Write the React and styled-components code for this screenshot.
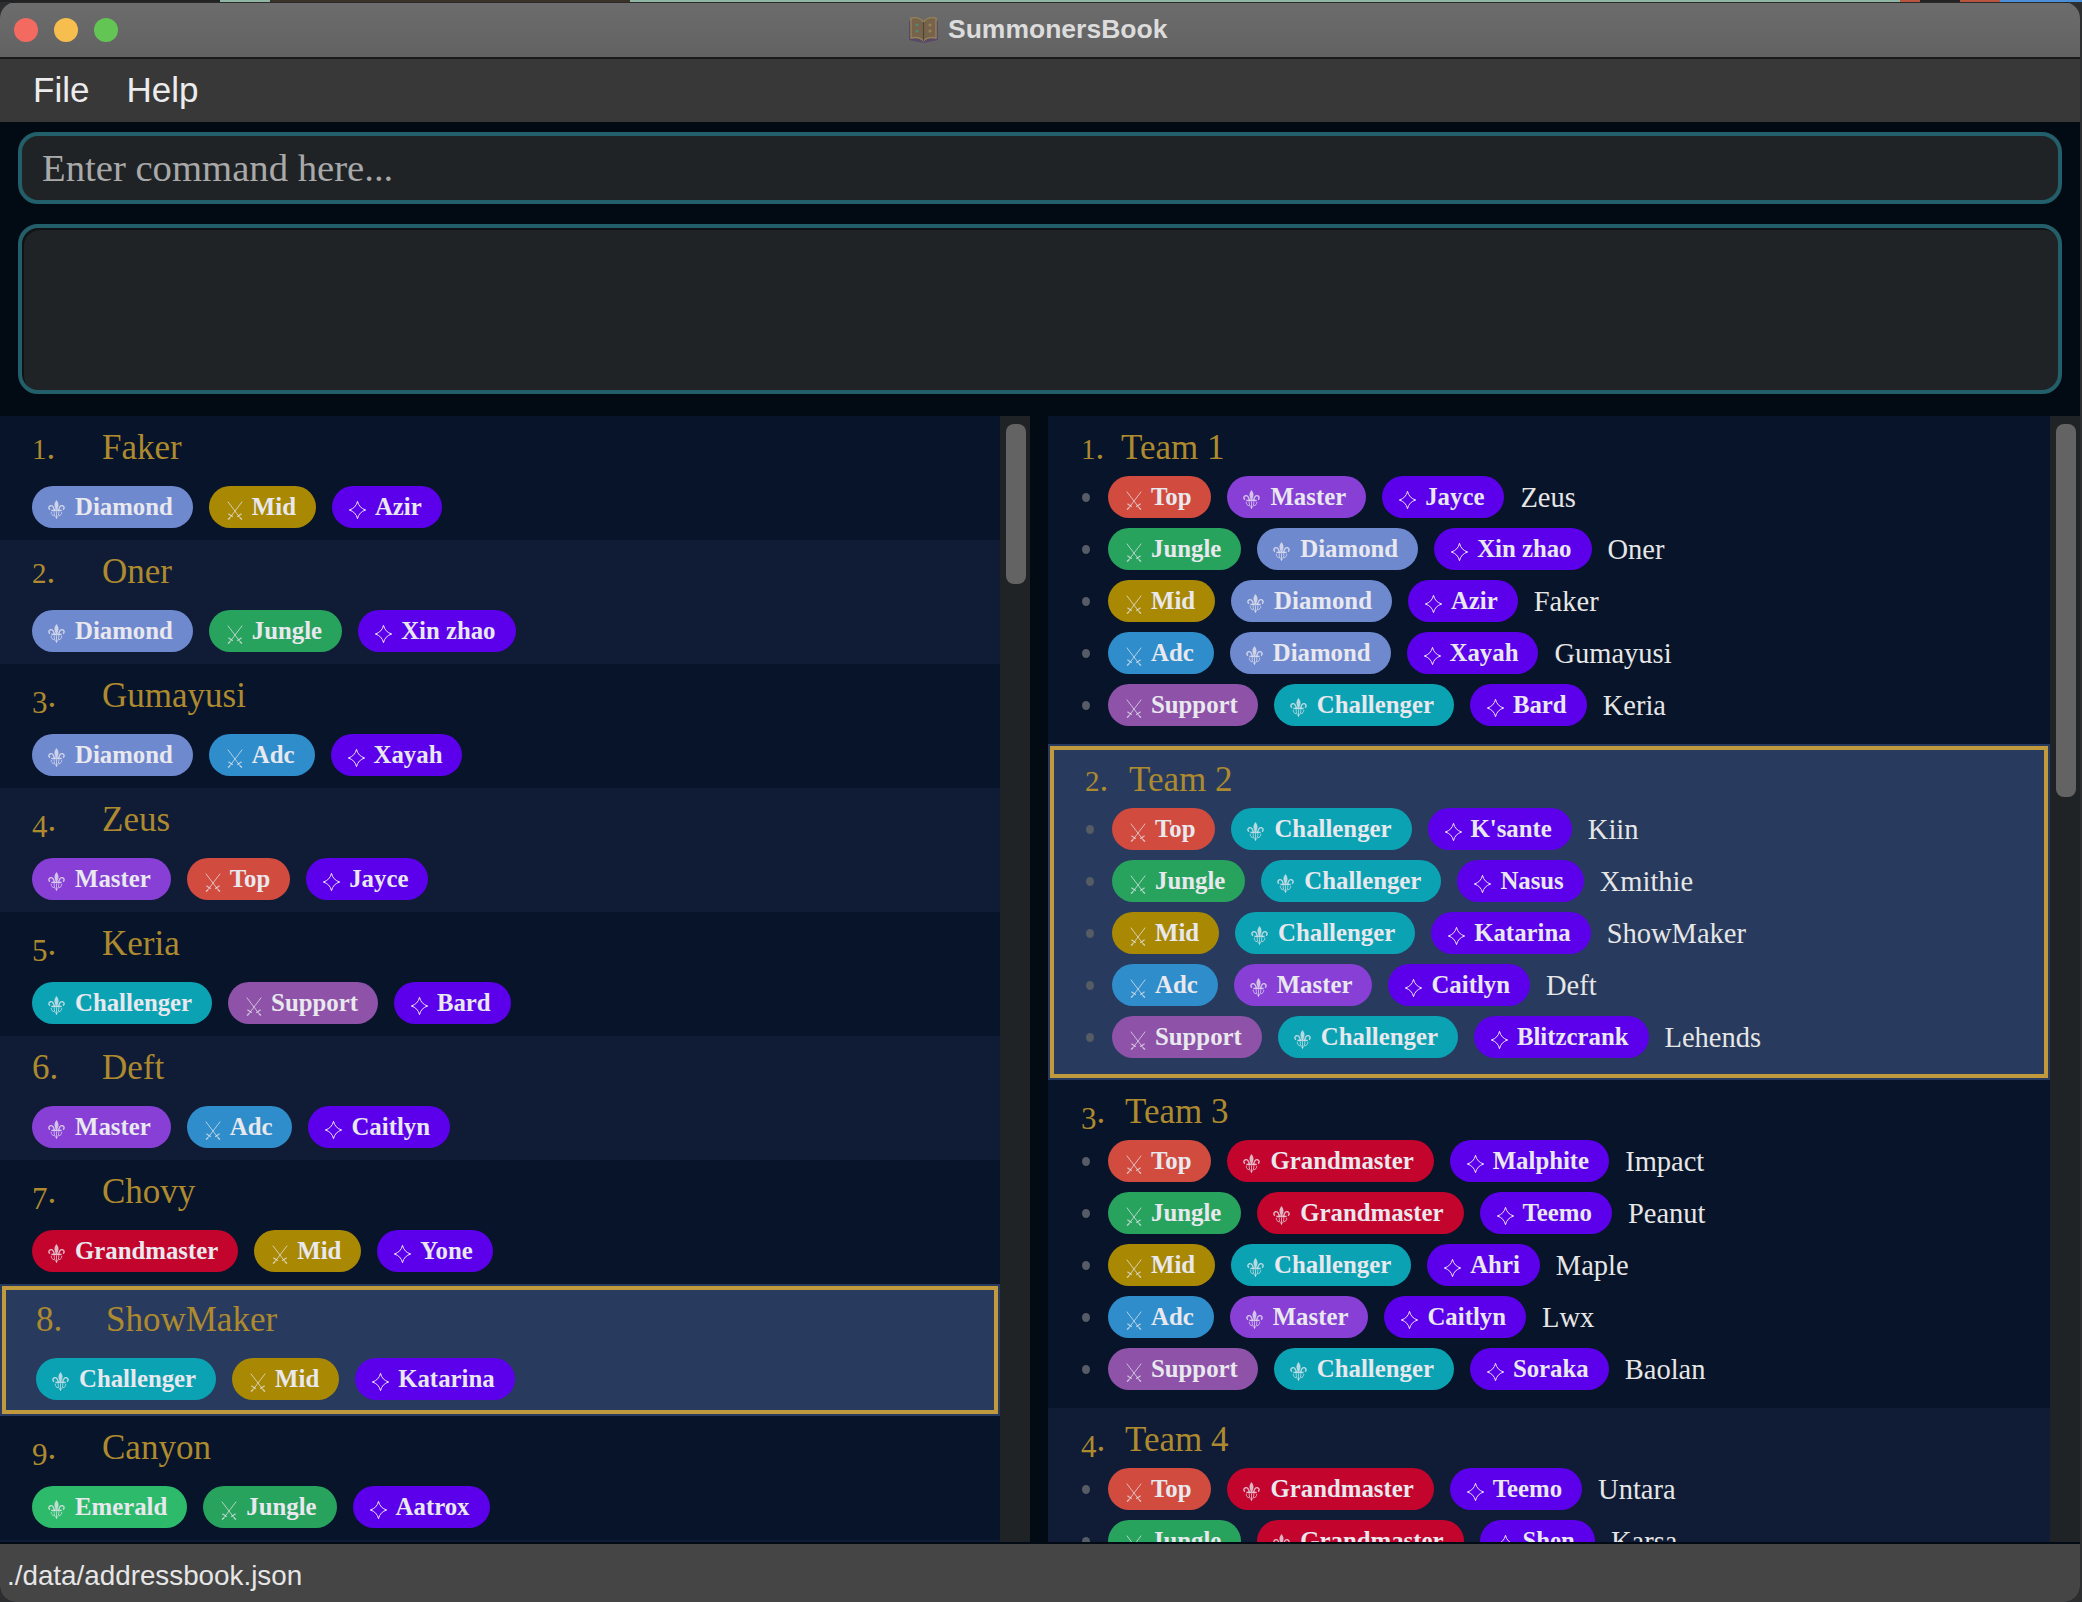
import React from 'react';
import styled, { createGlobalStyle } from 'styled-components';

const Global = createGlobalStyle`
  html, body { margin: 0; padding: 0; width: 2082px; height: 1602px; overflow: hidden; }
  body {
    background:
      linear-gradient(90deg, #222 0 220px, #8fb5a5 220px 270px, #3a3226 270px 630px, #8fb5a5 630px 1900px, #b8553f 1900px 1920px, #222 1920px 1960px, #b8553f 1960px 2000px, #4a8fd8 2000px) top / 100% 2px no-repeat,
      #2c2e30;
  }
  * { box-sizing: border-box; }
`;

const COLORS = {
  Diamond: '#6f89cf', Master: '#873fd6', Challenger: '#0ba3b3', Grandmaster: '#c3042d', Emerald: '#2dbb6b',
  Top: '#d14b3e', Jungle: '#27a35d', Mid: '#a98904', Adc: '#2f8dcb', Support: '#8e52a8',
};
const RANKS = ['Diamond', 'Master', 'Challenger', 'Grandmaster', 'Emerald'];
const ROLES = ['Top', 'Jungle', 'Mid', 'Adc', 'Support'];

const PLAYERS = [
  ['Faker', 'Diamond', 'Mid', 'Azir'],
  ['Oner', 'Diamond', 'Jungle', 'Xin zhao'],
  ['Gumayusi', 'Diamond', 'Adc', 'Xayah'],
  ['Zeus', 'Master', 'Top', 'Jayce'],
  ['Keria', 'Challenger', 'Support', 'Bard'],
  ['Deft', 'Master', 'Adc', 'Caitlyn'],
  ['Chovy', 'Grandmaster', 'Mid', 'Yone'],
  ['ShowMaker', 'Challenger', 'Mid', 'Katarina'],
  ['Canyon', 'Emerald', 'Jungle', 'Aatrox'],
];

const TEAMS = [
  ['Team 1', 40, [
    ['Top', 'Master', 'Jayce', 'Zeus'],
    ['Jungle', 'Diamond', 'Xin zhao', 'Oner'],
    ['Mid', 'Diamond', 'Azir', 'Faker'],
    ['Adc', 'Diamond', 'Xayah', 'Gumayusi'],
    ['Support', 'Challenger', 'Bard', 'Keria'],
  ]],
  ['Team 2', 44, [
    ['Top', 'Challenger', "K'sante", 'Kiin'],
    ['Jungle', 'Challenger', 'Nasus', 'Xmithie'],
    ['Mid', 'Challenger', 'Katarina', 'ShowMaker'],
    ['Adc', 'Master', 'Caitlyn', 'Deft'],
    ['Support', 'Challenger', 'Blitzcrank', 'Lehends'],
  ]],
  ['Team 3', 44, [
    ['Top', 'Grandmaster', 'Malphite', 'Impact'],
    ['Jungle', 'Grandmaster', 'Teemo', 'Peanut'],
    ['Mid', 'Challenger', 'Ahri', 'Maple'],
    ['Adc', 'Master', 'Caitlyn', 'Lwx'],
    ['Support', 'Challenger', 'Soraka', 'Baolan'],
  ]],
  ['Team 4', 44, [
    ['Top', 'Grandmaster', 'Teemo', 'Untara'],
    ['Jungle', 'Grandmaster', 'Shen', 'Karsa'],
  ]],
];

const Window = styled.div`
  width: 2080px;
  height: 1600px;
  margin-top: 2px;
  border-radius: 16px;
  overflow: hidden;
  display: flex;
  flex-direction: column;
  background: #020a14;
  font-family: "Liberation Serif", serif;
`;
const TitleBar = styled.div`
  height: 57px;
  flex: none;
  position: relative;
  background: linear-gradient(#6c6c6c, #626262);
  border-top: 1px solid #2a2a2a;
  border-bottom: 2px solid #1a1a1a;
  display: flex;
  align-items: center;
  padding-left: 14px;
  gap: 16px;
`;
const Light = styled.span`
  width: 24px;
  height: 24px;
  border-radius: 50%;
  background: ${p => p.$c};
`;
const TitleGroup = styled.div`
  position: absolute;
  left: 908px;
  top: 11px;
  display: flex;
  align-items: center;
  gap: 9px;
  font: bold 26.5px "Liberation Sans", sans-serif;
  color: #dcdcdc;
`;
const MenuBar = styled.div`
  height: 63px;
  flex: none;
  background: #383838;
  display: flex;
  align-items: center;
  gap: 37px;
  padding: 0 0 1px 33px;
  font: 35px "Liberation Sans", sans-serif;
  color: #ececec;
`;
const Top = styled.div`
  flex: none;
  display: flex;
  flex-direction: column;
  gap: 20px;
  padding: 10px 18px 22px 18px;
`;
const CommandBox = styled.div`
  height: 72px;
  border: 4px solid #235f6a;
  border-radius: 20px;
  background: #1f2326;
  color: #a9a9a9;
  font-size: 38.7px;
  display: flex;
  align-items: center;
  padding: 0 0 1px 20px;
`;
const ResultBox = styled.div`
  height: 170px;
  border: 4px solid #235f6a;
  border-radius: 20px;
  background: #1f2326;
  box-shadow: inset 2px 2px 0 #0f1316;
`;
const Lists = styled.div`
  flex: 1;
  min-height: 0;
  display: flex;
  gap: 18px;
  padding-bottom: 2px;
`;
const Pane = styled.div`
  width: ${p => p.$w}px;
  display: flex;
  min-height: 0;
`;
const Scroller = styled.div`
  flex: 1;
  min-width: 0;
  overflow: hidden;
`;
const Track = styled.div`
  width: 30px;
  flex: none;
  background: #1f2326;
  padding: 8px 4px 0 6px;
`;
const Thumb = styled.div`
  height: ${p => p.$h}px;
  border-radius: 8px;
  background: #636363;
`;
const Row = styled.div`
  padding: 2px;
  background: ${p => (p.$sel ? '#283b5e' : p.$alt ? '#101c36' : '#08142a')};
`;
const RowInner = styled.div`
  border: ${p => (p.$sel ? '4px solid #c09a3c' : '0 solid transparent')};
  padding: 8px 0 ${p => p.$pb}px ${p => p.$pl}px;
  min-height: ${p => (p.$empty ? 120 : 0)}px;
`;
const Heading = styled.div`
  display: flex;
  height: 40px;
  line-height: 44px;
  font-size: 35px;
  color: #ae8a2f;
`;
const Num = styled.span`
  width: ${p => p.$w}px;
  flex: none;
  white-space: nowrap;
`;
const Digit = styled.span`
  font-size: ${p => p.$size}px;
  vertical-align: ${p => p.$drop}px;
`;
const ChipRow = styled.div`
  display: flex;
  gap: 16px;
  margin-top: 20px;
`;
const Chip = styled.span`
  height: 42px;
  border-radius: 21px;
  background: ${p => p.$c};
  color: #e8e8ee;
  font-size: 24.8px;
  font-weight: bold;
  display: inline-flex;
  align-items: center;
  gap: ${p => p.$gap}px;
  padding: 0 20px 0 ${p => p.$pl}px;
  white-space: nowrap;
  flex: none;
`;
const Members = styled.div`
  display: flex;
  flex-direction: column;
  gap: 10px;
  margin-top: 10px;
`;
const Member = styled.div`
  display: flex;
  align-items: center;
  gap: 16px;
  height: 42px;
`;
const Bullet = styled.span`
  width: 8px;
  height: 9px;
  border-radius: 50%;
  background: #555c66;
  margin-left: 1px;
  margin-right: 2px;
  flex: none;
`;
const MemberName = styled.span`
  font-size: 28.5px;
  color: #e6e6e6;
  white-space: nowrap;
  padding-top: 2px;
`;
const Status = styled.div`
  height: 58px;
  flex: none;
  background: #454545;
  color: #e6e6e6;
  font: 27.8px "Liberation Sans", sans-serif;
  display: flex;
  align-items: center;
  padding: 6px 0 0 7px;
`;
const Glyph = styled.svg`
  flex: none;
  display: block;
  margin-top: ${p => p.$mt}px;
`;

const Fleur = () => (
  <Glyph $mt={4} width="17" height="19" viewBox="0 0 18 20" fill="none" stroke="#e8e8ee" strokeOpacity="0.78" strokeWidth="1.1">
    <path d="M9 0C10.6 2.4 11.6 4 11 6.2C10.7 7.6 10 8.6 10 10.4H8C8 8.6 7.3 7.6 7 6.2C6.4 4 7.4 2.4 9 0Z" fill="#e8e8ee" fillOpacity="0.78" stroke="none" />
    <path d="M6.6 11C6.6 8 4.8 5.4 2.6 6C0.6 6.6 0.2 9.2 2.2 10" strokeWidth="1.5" />
    <path d="M11.4 11C11.4 8 13.2 5.4 15.4 6C17.4 6.6 17.8 9.2 15.8 10" strokeWidth="1.5" />
    <path d="M3.5 11H14.5" strokeWidth="1.6" />
    <path d="M9 12V20M6.6 12C6.4 15 7 17 9 19M11.4 12C11.6 15 11 17 9 19M3.4 12.5C3.4 15 4.6 16.4 6.6 16.6M14.6 12.5C14.6 15 13.4 16.4 11.4 16.6" strokeWidth="0.9" />
  </Glyph>
);
const Swords = () => (
  <Glyph $mt={6} width="16" height="19" viewBox="0 0 16 19" fill="none" stroke="#e8e8ee" strokeOpacity="0.72" strokeWidth="1">
    <path d="M0.8 0.6L13.4 17.2M15.2 0.6L2.6 17.2" />
    <path d="M10.2 15.8L14.6 12.8M5.8 15.8L1.4 12.8" strokeWidth="1.3" />
    <path d="M13 16.8L15 18.6M3 16.8L1 18.6" strokeWidth="1.4" />
  </Glyph>
);
const Spark = () => (
  <Glyph $mt={5} width="17" height="18" viewBox="0 0 17 18" fill="none" stroke="#ece4fb" strokeWidth="1">
    <path d="M8.5 0.3Q10 7 16.7 9Q10 11 8.5 17.7Q7 11 0.3 9Q7 7 8.5 0.3Z" />
  </Glyph>
);

const Tag = ({ label }) => {
  if (RANKS.includes(label)) return <Chip $c={COLORS[label]} $pl={16} $gap={10}><Fleur />{label}</Chip>;
  if (ROLES.includes(label)) return <Chip $c={COLORS[label]} $pl={18} $gap={9}><Swords />{label}</Chip>;
  return <Chip $c="#5c00eb" $pl={17} $gap={9}><Spark />{label}</Chip>;
};

// The reference's serif has old-style figures: 1 and 2 sit on the x-height,
// 3 4 5 7 9 hang below the baseline, 6 and 8 stand at full height.
const figure = n => {
  if (n <= 2) return { $size: 29, $drop: 0 };
  if (n === 6 || n === 8) return { $size: 35, $drop: 0 };
  return { $size: 31, $drop: -6 };
};
const Index = ({ n, w }) => (
  <Num $w={w}><Digit {...figure(n)}>{n}</Digit>.</Num>
);

const Book = () => (
  <svg width="31" height="28" viewBox="0 0 31 28" fill="none" opacity="0.75">
    <path d="M1 24V5L15.5 8L30 5V24L15.5 27Z" fill="#55406a" />
    <path d="M3 22V2C8 1 13 2.5 15.5 6C18 2.5 23 1 28 2V22C23 21 18 22 15.5 25C13 22 8 21 3 22Z" fill="#7c6240" stroke="#a58a52" strokeWidth="1.4" />
    <path d="M15.5 6V25" stroke="#4a3a2a" strokeWidth="1.2" />
    <circle cx="9" cy="9" r="1.6" fill="#4f8f7a" />
    <circle cx="9" cy="15" r="1.6" fill="#4f8f7a" />
    <circle cx="22" cy="9" r="1.6" fill="#a58a52" />
    <circle cx="22" cy="15" r="1.6" fill="#a58a52" />
  </svg>
);

export default function App() {
  return (
    <>
      <Global />
      <Window>
        <TitleBar>
          <Light $c="#f26a60" />
          <Light $c="#f6bd4f" />
          <Light $c="#62c554" />
          <TitleGroup><Book />SummonersBook</TitleGroup>
        </TitleBar>
        <MenuBar><span>File</span><span>Help</span></MenuBar>
        <Top>
          <CommandBox>Enter command here...</CommandBox>
          <ResultBox />
        </Top>
        <Lists>
          <Pane $w={1030}>
            <Scroller>
              {PLAYERS.map(([name, ...tags], i) => (
                <Row key={name} $alt={i % 2 === 1} $sel={name === 'ShowMaker'}>
                  <RowInner $sel={name === 'ShowMaker'} $pb={10} $pl={30}>
                    <Heading><Index n={i + 1} w={70} />{name}</Heading>
                    <ChipRow>{tags.map(t => <Tag key={t} label={t} />)}</ChipRow>
                  </RowInner>
                </Row>
              ))}
              <Row $alt><RowInner $empty $pb={10} $pl={30} /></Row>
            </Scroller>
            <Track><Thumb $h={160} /></Track>
          </Pane>
          <Pane $w={1032}>
            <Scroller>
              {TEAMS.map(([name, numWidth, members], i) => (
                <Row key={name} $alt={i % 2 === 1} $sel={name === 'Team 2'}>
                  <RowInner $sel={name === 'Team 2'} $pb={16} $pl={31}>
                    <Heading><Index n={i + 1} w={numWidth} />{name}</Heading>
                    <Members>
                      {members.map(([role, rank, champ, player]) => (
                        <Member key={player}>
                          <Bullet />
                          <Tag label={role} />
                          <Tag label={rank} />
                          <Tag label={champ} />
                          <MemberName>{player}</MemberName>
                        </Member>
                      ))}
                    </Members>
                  </RowInner>
                </Row>
              ))}
            </Scroller>
            <Track><Thumb $h={373} /></Track>
          </Pane>
        </Lists>
        <Status>./data/addressbook.json</Status>
      </Window>
    </>
  );
}
